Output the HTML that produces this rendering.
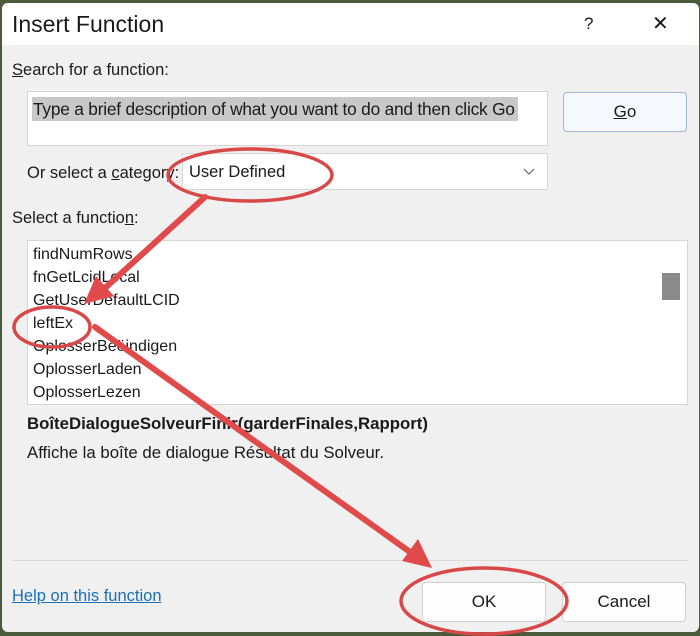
<!DOCTYPE html>
<html><head><style>
*{margin:0;padding:0;box-sizing:border-box}
body{width:700px;height:636px;overflow:hidden;background:#4a5a3a;font-family:"Liberation Sans",sans-serif;color:#1a1a1a;position:relative}
.dlg{position:absolute;left:2px;top:3px;width:697px;height:629px;background:#f0f0f0;border-radius:6px;overflow:hidden}
.tb{position:absolute;left:0;top:0;width:100%;height:42px;background:#fff}
.a{position:absolute;white-space:nowrap}
.box{position:absolute;background:#fff;border:1px solid #d6d6d6}
.btn{position:absolute;background:#fdfdfd;border:1px solid #d0d0d0;border-radius:4px;text-align:center;font-size:16px}
.li{position:absolute;left:33px;font-size:16px}
</style></head><body>
<div class="dlg">
<div class="tb"></div>
<div class="a" style="left:10px;top:8px;font-size:23px">Insert Function</div>
<div class="a" style="left:582px;top:11px;font-size:17px">?</div>
<div class="a" style="left:650px;top:8px;font-size:20px">✕</div>
<div class="a" style="left:10px;top:58px;font-size:16.5px"><u>S</u>earch for a function:</div>
<div class="box" style="left:25px;top:88px;width:521px;height:55px"></div>
<div class="a" style="left:30px;top:94px;width:486px;height:24px;background:#c8c8c8"></div>
<div class="a" style="left:31px;top:96px;font-size:17.3px;letter-spacing:-0.2px">Type a brief description of what you want to do and then click Go</div>
<div class="btn" style="left:561px;top:89px;width:124px;height:40px;line-height:38px;border-color:#9db8d4;background:#f5f9fd;font-size:17px"><u>G</u>o</div>
<div class="a" style="left:25px;top:161px;font-size:16.5px">Or select a <u>c</u>ategory:</div>
<div class="box" style="left:180px;top:150px;width:366px;height:37px"></div>
<div class="a" style="left:187px;top:160px;font-size:16.5px">User Defined</div>
<svg class="a" style="left:520px;top:164px" width="14" height="10"><path d="M2 2 L7 7 L12 2" fill="none" stroke="#666" stroke-width="1.2"/></svg>
<div class="a" style="left:10px;top:206px;font-size:16.5px">Select a functio<u>n</u>:</div>
<div class="box" style="left:25px;top:237px;width:661px;height:165px"></div>
<div class="a" style="left:660px;top:270px;width:18px;height:27px;background:#8a8a8a"></div>
<div class="li" style="left:31px;top:243px">findNumRows</div>
<div class="li" style="left:31px;top:266px">fnGetLcidLocal</div>
<div class="li" style="left:31px;top:289px">GetUserDefaultLCID</div>
<div class="li" style="left:31px;top:312px">leftEx</div>
<div class="li" style="left:31px;top:335px">OplosserBeëindigen</div>
<div class="li" style="left:31px;top:358px">OplosserLaden</div>
<div class="li" style="left:31px;top:381px">OplosserLezen</div>
<div class="a" style="left:25px;top:411px;font-size:16.8px;font-weight:bold">BoîteDialogueSolveurFinir(garderFinales,Rapport)</div>
<div class="a" style="left:25px;top:440px;font-size:16.8px">Affiche la boîte de dialogue Résultat du Solveur.</div>
<div class="a" style="left:10px;top:557px;width:676px;height:1px;background:#dcdcdc"></div>
<div class="a" style="left:10px;top:584px;font-size:16.5px;color:#1a6fb5;text-decoration:underline">Help on this function</div>
<div class="btn" style="left:420px;top:579px;width:124px;height:40px;line-height:38px;font-size:17px">OK</div>
<div class="btn" style="left:560px;top:579px;width:124px;height:40px;line-height:38px;font-size:17px">Cancel</div>
</div>
<svg width="700" height="636" style="position:absolute;left:0;top:0">
<g fill="none" stroke="#d94848" stroke-width="3.5">
<ellipse cx="250" cy="175" rx="82" ry="26"/>
<ellipse cx="52" cy="327" rx="38" ry="20"/>
<ellipse cx="484" cy="601" rx="83" ry="33"/>
</g>
<g stroke="#e04a4a" stroke-width="6" stroke-linecap="round">
<line x1="205" y1="197" x2="105" y2="288"/>
<line x1="95" y1="327" x2="410" y2="552"/>
</g>
<g fill="#e04a4a">
<polygon points="84,304 96,276 114,296"/>
<polygon points="432,568 402,561 418,539"/>
</g>
</svg>
</body></html>
